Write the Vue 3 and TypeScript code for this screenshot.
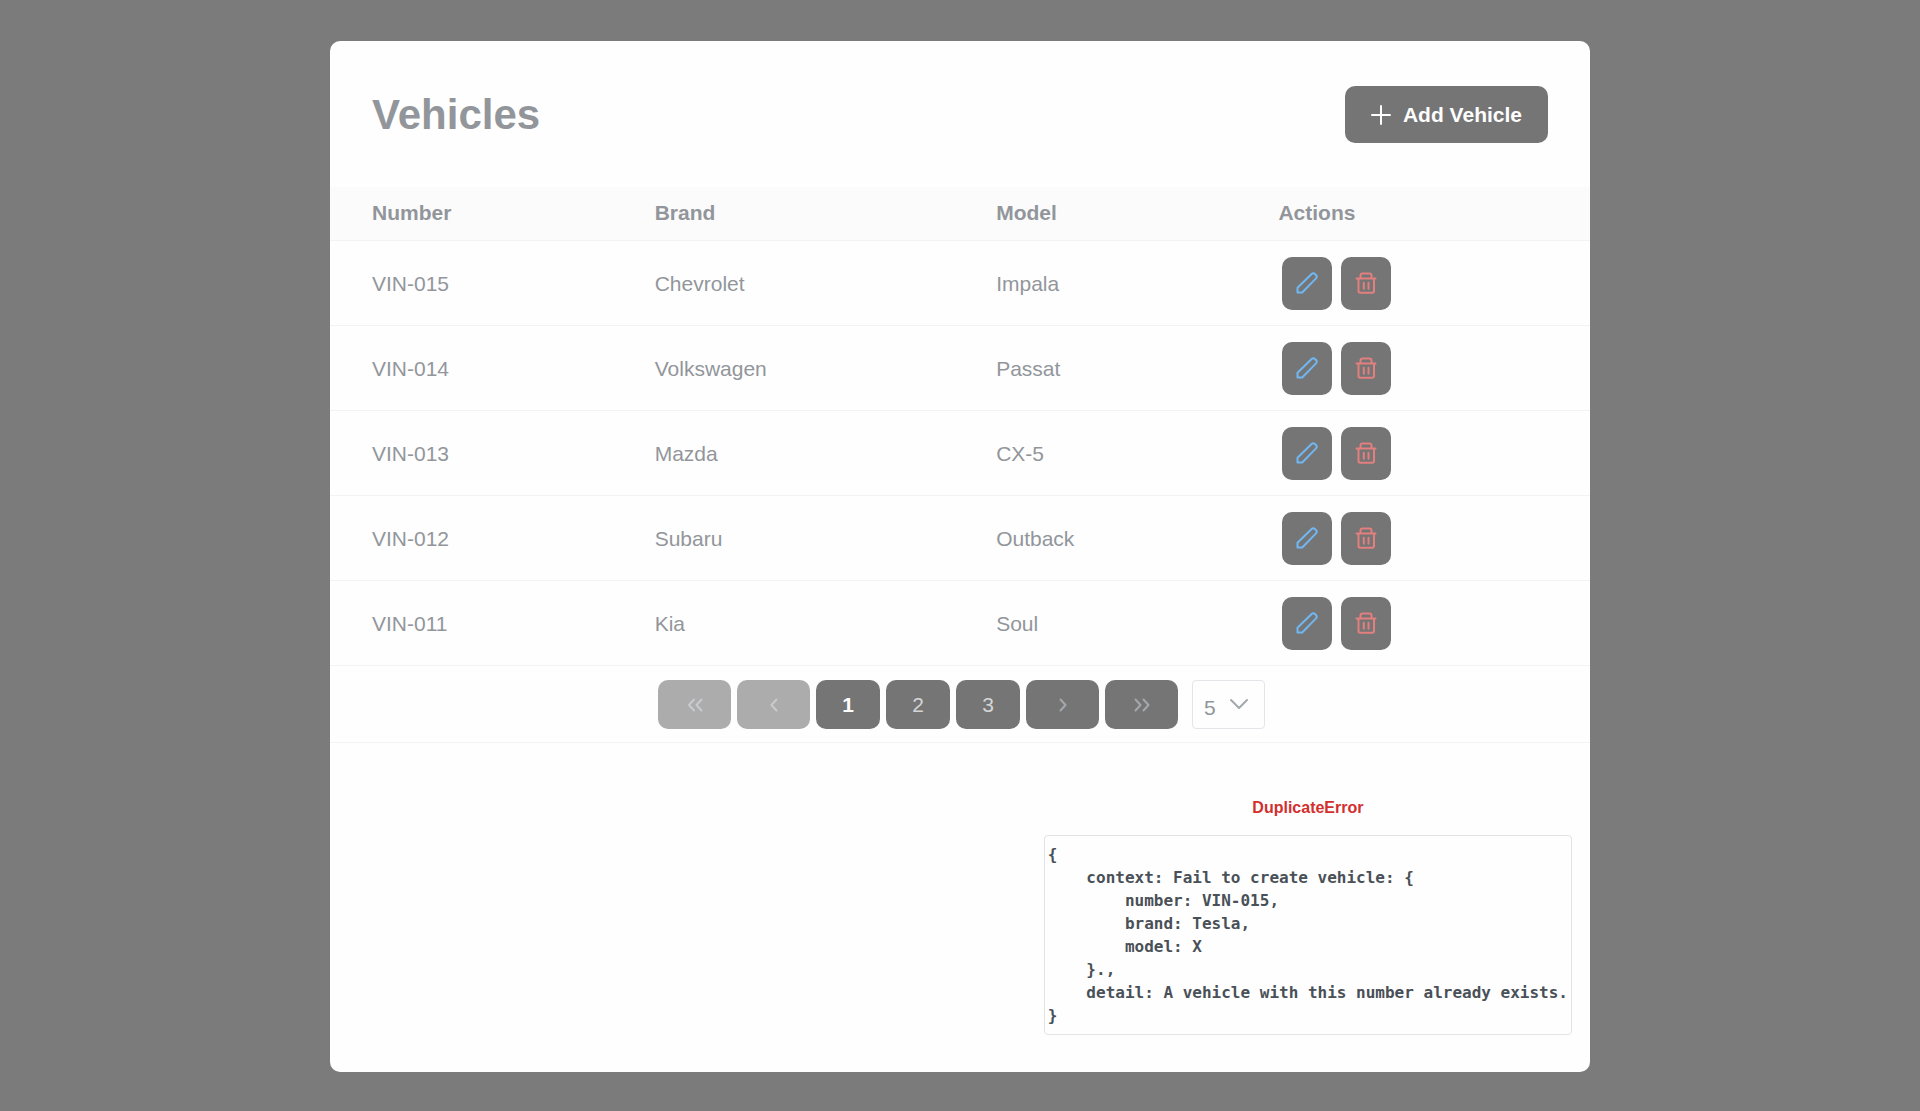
<script setup lang="ts">
import { ref } from 'vue'

interface Vehicle {
  number: string
  brand: string
  model: string
}

const vehicles: Vehicle[] = [
  { number: 'VIN-015', brand: 'Chevrolet', model: 'Impala' },
  { number: 'VIN-014', brand: 'Volkswagen', model: 'Passat' },
  { number: 'VIN-013', brand: 'Mazda', model: 'CX-5' },
  { number: 'VIN-012', brand: 'Subaru', model: 'Outback' },
  { number: 'VIN-011', brand: 'Kia', model: 'Soul' },
]

const pages = [1, 2, 3]
const currentPage = ref(1)
const pageSize = ref(5)

const errorDetail = `{
    context: Fail to create vehicle: {
        number: VIN-015,
        brand: Tesla,
        model: X
    }.,
    detail: A vehicle with this number already exists.
}`
</script>

<template>
  <main class="page">
    <section class="card">
      <header class="card-header">
        <h1>Vehicles</h1>
        <button class="add" type="button">
          <svg width="20" height="20" viewBox="0 0 20 20" aria-hidden="true">
            <path d="M10 1v18M1 10h18" />
          </svg>
          <span>Add Vehicle</span>
        </button>
      </header>

      <table>
        <thead>
          <tr>
            <th class="col-number">Number</th>
            <th class="col-brand">Brand</th>
            <th class="col-model">Model</th>
            <th>Actions</th>
          </tr>
        </thead>
        <tbody>
          <tr v-for="v in vehicles" :key="v.number">
            <td>{{ v.number }}</td>
            <td>{{ v.brand }}</td>
            <td>{{ v.model }}</td>
            <td>
              <div class="actions">
                <button class="icon-button edit" type="button" aria-label="Edit">
                  <svg width="22" height="22" viewBox="0 0 22 22" aria-hidden="true">
                    <path d="M1.500 20.500v-4.700L15.400 2.200a2.700 2.700 0 0 1 3.800 0l.6.6a2.700 2.700 0 0 1 0 3.800L6.200 20.500z" />
                  </svg>
                </button>
                <button class="icon-button remove" type="button" aria-label="Delete">
                  <svg width="22" height="22" viewBox="0 0 22 22" aria-hidden="true">
                    <path d="M1.500 6.500h19M3.500 6.500v12.500a1.800 1.800 0 0 0 1.800 1.800h11.900a1.800 1.800 0 0 0 1.800-1.800v-12.500M5.500 6V3.500A2 2 0 0 1 7.500 1.500h7a2 2 0 0 1 2 2V6M8.800 10.800v6M13.500 10.800v6" />
                  </svg>
                </button>
              </div>
            </td>
          </tr>
        </tbody>
      </table>

      <nav class="paginator" aria-label="Pagination">
        <button class="step" type="button" disabled aria-label="First page">
          <svg width="16" height="16" viewBox="0 0 16 16" aria-hidden="true">
            <path d="M7 2.500L2 8l5 5.500M14.500 2.500L9.500 8l5 5.500" />
          </svg>
        </button>
        <button class="step" type="button" disabled aria-label="Previous page">
          <svg width="16" height="16" viewBox="0 0 16 16" aria-hidden="true">
            <path d="M10.500 2.500L5.500 8l5 5.500" />
          </svg>
        </button>
        <button
          v-for="p in pages"
          :key="p"
          class="number"
          :class="{ current: p === currentPage }"
          type="button"
          @click="currentPage = p"
        >
          {{ p }}
        </button>
        <button class="step" type="button" aria-label="Next page">
          <svg width="16" height="16" viewBox="0 0 16 16" aria-hidden="true">
            <path d="M5.500 2.500l5 5.500-5 5.500" />
          </svg>
        </button>
        <button class="step" type="button" aria-label="Last page">
          <svg width="16" height="16" viewBox="0 0 16 16" aria-hidden="true">
            <path d="M1.500 2.500l5 5.500-5 5.500M9.500 2.500l5 5.500-5 5.500" />
          </svg>
        </button>
        <div class="page-size">
          <select v-model="pageSize" aria-label="Rows per page">
            <option :value="5">5</option>
            <option :value="10">10</option>
            <option :value="20">20</option>
          </select>
          <svg width="20" height="12" viewBox="0 0 20 12" aria-hidden="true">
            <path d="M2 2l8 8 8-8" />
          </svg>
        </div>
      </nav>

      <div class="error" role="alert">
        <div class="error-body">
          <h2>DuplicateError</h2>
          <pre>{{ errorDetail }}</pre>
        </div>
      </div>
    </section>
  </main>
</template>

<style>
body {
  background: #7b7b7b;
}
</style>

<style scoped>
.page {
  box-sizing: border-box;
  min-height: 100vh;
  padding: 41px 16px 39px;
  background: #7b7b7b;
  color: #92969b;
  font: 21px/31px "Liberation Sans", Arial, sans-serif;
}

.card {
  max-width: 1260px;
  margin: 0 auto;
  overflow: hidden;
  border-radius: 10px;
  background: #fefefe;
}

.card-header {
  display: flex;
  align-items: center;
  justify-content: space-between;
  padding: 45px 42px 44px;
}

h1 {
  margin: 0;
  font-size: 42px;
  line-height: 52px;
}

button {
  display: inline-flex;
  align-items: center;
  justify-content: center;
  margin: 0;
  padding: 0;
  border: 0;
  border-radius: 10px;
  background: #757575;
  color: #d5d5d5;
  font: inherit;
}

svg {
  flex: none;
  fill: none;
  stroke: currentColor;
  stroke-width: 2;
  stroke-linecap: round;
  stroke-linejoin: round;
}

.add {
  gap: 12px;
  height: 57px;
  padding: 0 26px;
  color: #fefefe;
  font-weight: 700;
}

table {
  width: 100%;
  border-collapse: separate;
  border-spacing: 0;
  table-layout: fixed;
}

th,
td {
  box-sizing: border-box;
  padding: 0 16px;
  border-bottom: 1px solid #f2f3f4;
  text-align: left;
}

th {
  height: 54px;
  padding-bottom: 2px;
  background: #fbfbfb;
  font-weight: 700;
}

td {
  height: 85px;
}

th:first-child,
td:first-child {
  padding-left: 42px;
}

.col-number {
  width: 24.5%;
}

.col-brand {
  width: 27.1%;
}

.col-model {
  width: 22.4%;
}

.actions {
  display: flex;
  gap: 9px;
  padding-left: 4px;
}

.icon-button {
  width: 50px;
  height: 53px;
}

.edit {
  color: #71b7f2;
}

.remove {
  color: #e37f7f;
}

.paginator {
  display: flex;
  align-items: center;
  justify-content: center;
  gap: 6px;
  padding: 14px 0 13px 3px;
  border-bottom: 1px solid #f2f3f4;
}

.paginator button {
  height: 49px;
}

.paginator .step {
  width: 73px;
  color: #a4a8ac;
}

.paginator .step:disabled {
  background: #acacac;
  color: #c8cacd;
}

.paginator .number {
  width: 64px;
}

.paginator .current {
  color: #fefefe;
  font-weight: 700;
}

.page-size {
  position: relative;
  margin-left: 8px;
}

.page-size select {
  box-sizing: border-box;
  display: block;
  width: 73px;
  height: 49px;
  margin: 0;
  padding: 5px 36px 0 11px;
  border: 1px solid #e3e5e9;
  border-radius: 4px;
  appearance: none;
  background: #fefefe;
  color: inherit;
  font: inherit;
}

.page-size svg {
  position: absolute;
  top: 18px;
  right: 16px;
  color: #a3a8ad;
  pointer-events: none;
}

.error {
  display: flex;
  justify-content: flex-end;
  padding: 53px 18px 37px;
}

.error-body {
  text-align: center;
}

h2 {
  margin: 0 0 15px;
  color: #d32f2f;
  font-size: 16px;
  line-height: 24px;
}

pre {
  margin: 0;
  padding: 7px 3px;
  border: 1px solid #e2e3e5;
  border-radius: 4px;
  color: #495057;
  font: 700 16px/23px "DejaVu Sans Mono", monospace;
  text-align: left;
}
</style>
